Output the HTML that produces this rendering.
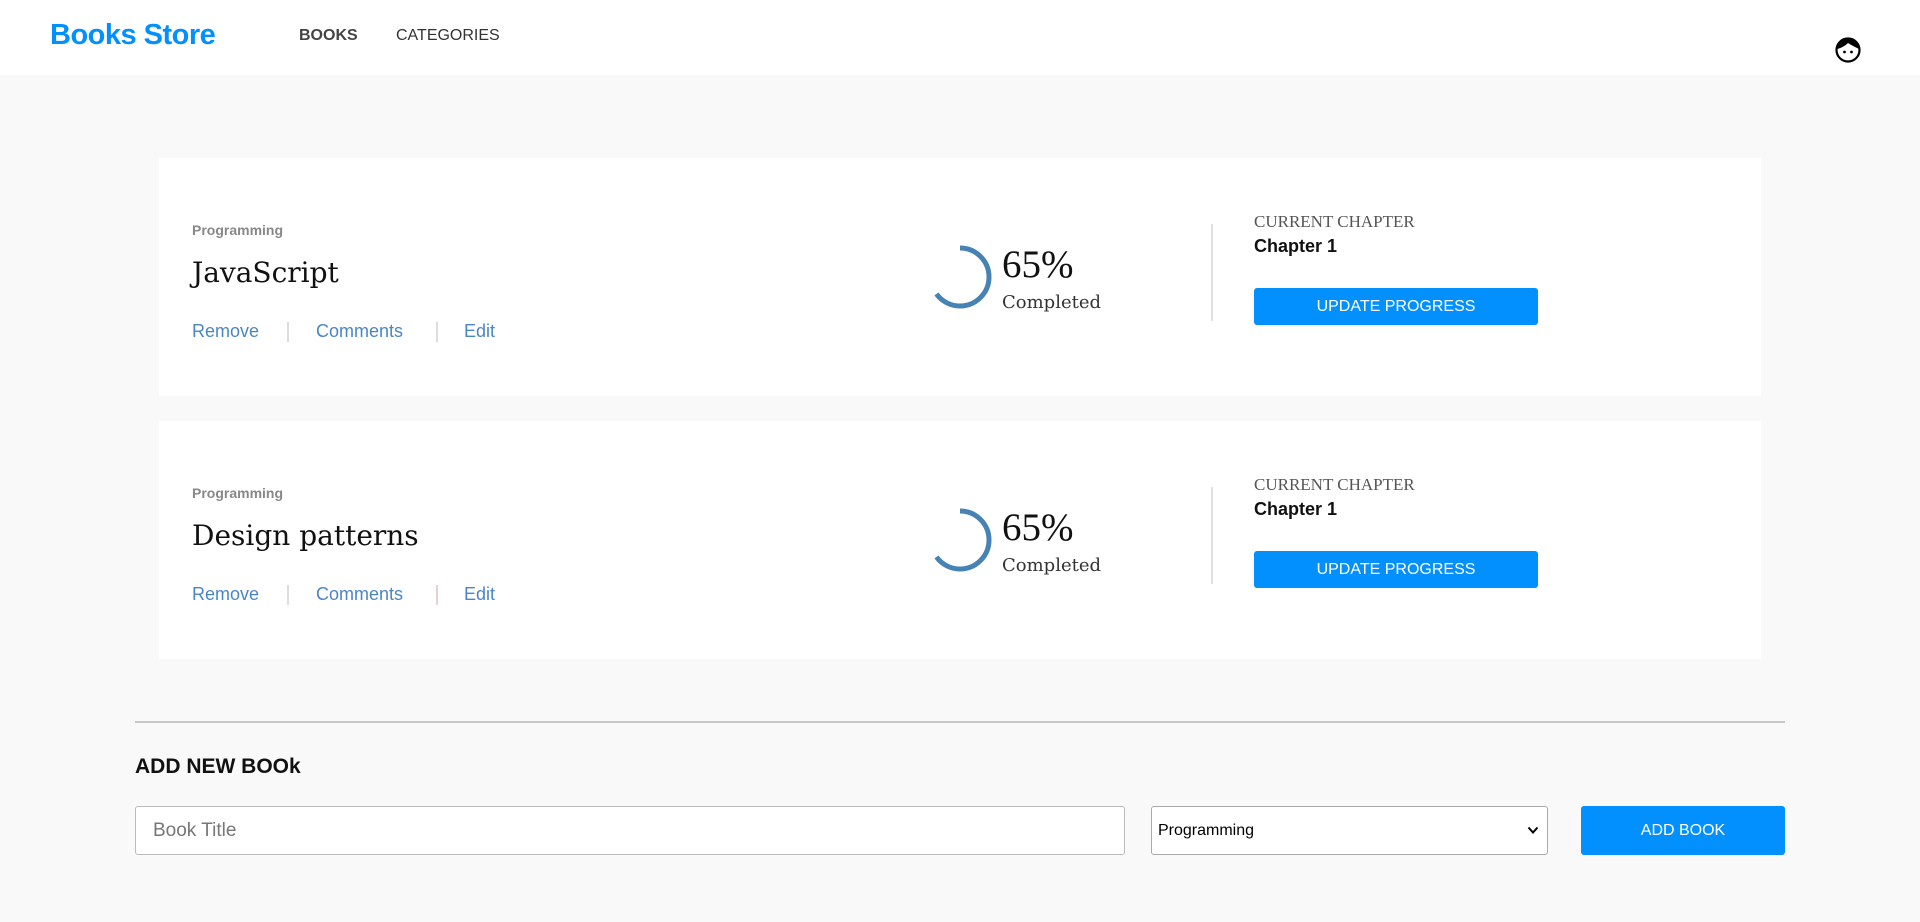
<!DOCTYPE html>
<html><head><meta charset="utf-8"><style>
*{box-sizing:border-box;margin:0;padding:0}
body{width:1920px;height:922px;background:#f9f9f9;font-family:"Liberation Sans",sans-serif;position:relative;overflow:hidden}
.abs{position:absolute}
header{position:absolute;left:0;top:0;width:1920px;height:75px;background:#fff}
.logo{left:50px;top:19px;font-size:29px;font-weight:bold;color:#0290ff;letter-spacing:-0.5px}
.nav{top:27px;font-size:16px;color:#333}
.card{position:absolute;left:159px;width:1602px;height:238px;background:#fff}
.cat{left:33px;top:64px;font-size:14px;font-weight:bold;color:#888}
.title{left:33px;top:98px;font-family:"DejaVu Serif",serif;font-size:28px;color:#111}
.links{left:33px;top:163px;font-size:18px;color:#4a86c5}
.sep{top:164px;width:2px;height:20px;background:#ddd}
.pct{left:843px;top:84px;font-family:"Liberation Serif",serif;font-size:39px;color:#111}
.comp{left:843px;top:134px;font-family:"DejaVu Serif",serif;font-size:18px;color:#333}
.div{left:1052px;top:66px;width:2px;height:97px;background:#e0e0e0}
.cc{left:1095px;top:54px;font-family:"Liberation Serif",serif;font-size:17px;color:#555}
.ch{left:1095px;top:78px;font-size:18px;color:#111;font-weight:bold;}
.btn{left:1095px;top:130px;width:284px;height:37px;background:#0290ff;border-radius:3px;color:#fff;font-size:16px;text-align:center;line-height:37px}
</style></head><body>
<header>
<div class="abs logo">Books Store</div>
<div class="abs nav" style="left:299px;font-weight:bold;color:#444">BOOKS</div>
<div class="abs nav" style="left:396px">CATEGORIES</div>
<svg class="abs" style="left:1835px;top:37px" width="26" height="26" viewBox="0 0 26 26">
<circle cx="13" cy="13" r="11.5" fill="#fff" stroke="#000" stroke-width="2.2"/>
<path d="M2 12 C3 3 10 1 13 1.5 C18 1.5 24 5 24 12 C20 10 16 8 13 6 C10 9 6 11 2 12Z" fill="#000"/>
<circle cx="9.5" cy="15" r="1.4" fill="#000"/><circle cx="16.5" cy="15" r="1.4" fill="#000"/>
</svg>
</header>

<div class="card" style="top:158px">
<div class="abs cat">Programming</div>
<div class="abs title">JavaScript</div>
<div class="abs links" style="left:33px">Remove</div>
<div class="abs sep" style="left:128px"></div>
<div class="abs links" style="left:157px">Comments</div>
<div class="abs sep" style="left:277px"></div>
<div class="abs links" style="left:305px">Edit</div>
<svg class="abs" style="left:766px;top:84px" width="70" height="70" viewBox="0 0 70 70"><circle cx="35" cy="35" r="29" fill="none" stroke="#4682b4" stroke-width="5" stroke-dasharray="118.4 200" transform="rotate(-90 35 35)"/></svg>
<div class="abs pct">65%</div>
<div class="abs comp">Completed</div>
<div class="abs div"></div>
<div class="abs cc">CURRENT CHAPTER</div>
<div class="abs ch">Chapter 1</div>
<div class="abs btn">UPDATE PROGRESS</div>
</div>

<div class="card" style="top:421px">
<div class="abs cat">Programming</div>
<div class="abs title">Design patterns</div>
<div class="abs links" style="left:33px">Remove</div>
<div class="abs sep" style="left:128px"></div>
<div class="abs links" style="left:157px">Comments</div>
<div class="abs sep" style="left:277px;background:#e8d0d0"></div>
<div class="abs links" style="left:305px">Edit</div>
<svg class="abs" style="left:766px;top:84px" width="70" height="70" viewBox="0 0 70 70"><circle cx="35" cy="35" r="29" fill="none" stroke="#4682b4" stroke-width="5" stroke-dasharray="118.4 200" transform="rotate(-90 35 35)"/></svg>
<div class="abs pct">65%</div>
<div class="abs comp">Completed</div>
<div class="abs div"></div>
<div class="abs cc">CURRENT CHAPTER</div>
<div class="abs ch">Chapter 1</div>
<div class="abs btn">UPDATE PROGRESS</div>
</div>

<div class="abs" style="left:135px;top:721px;width:1650px;height:2px;background:#c8c8c8"></div>
<div class="abs" style="left:135px;top:755px;font-size:21px;font-weight:bold;color:#111">ADD NEW BOOk</div>
<div class="abs" style="left:135px;top:806px;width:990px;height:49px;background:#fff;border:1px solid #bbb;border-radius:3px;padding-left:17px;line-height:47px;font-size:19px;color:#777">Book Title</div>
<div class="abs" style="left:1151px;top:806px;width:397px;height:49px;background:#fff;border:1px solid #aaa;border-radius:3px;padding-left:6px;line-height:47px;font-size:16px;color:#000">Programming
<svg class="abs" style="right:8px;top:19px" width="12" height="9" viewBox="0 0 12 9"><path d="M1.5 1.5 L6 6.5 L10.5 1.5" fill="none" stroke="#000" stroke-width="2"/></svg></div>
<div class="abs" style="left:1581px;top:806px;width:204px;height:49px;background:#0290ff;border-radius:3px;color:#fff;font-size:16px;text-align:center;line-height:49px">ADD BOOK</div>
</body></html>
